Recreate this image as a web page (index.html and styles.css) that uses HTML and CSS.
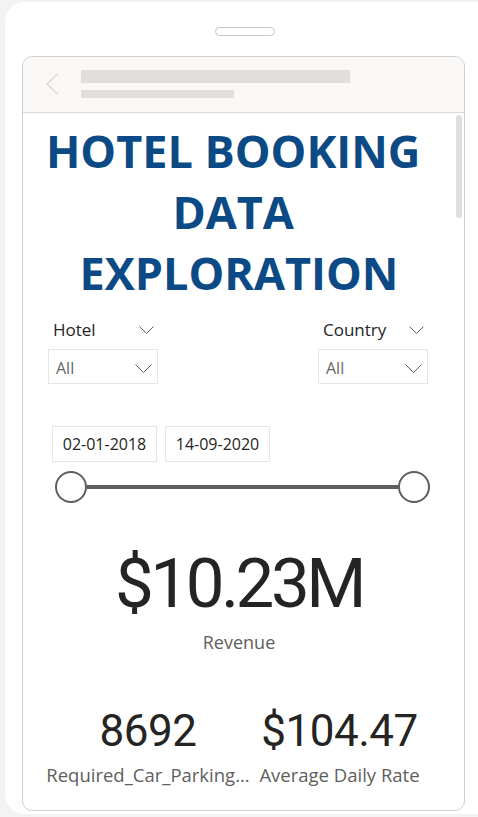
FILE: index.html
```html
<!DOCTYPE html>
<html>
<head>
<meta charset="utf-8">
<link rel="stylesheet" href="styles.css">
</head>
<body>
<div class="frame">
  <div class="notch"></div>
  <div class="screen">
    <div class="header">
      <svg class="back" width="13" height="22" viewBox="0 0 13 22"><polyline points="12,0.5 1,11 12,21.5" fill="none" stroke="#dcdad8" stroke-width="1.5"/></svg>
      <div class="bars">
        <div class="bar bar1"></div>
        <div class="bar bar2"></div>
      </div>
    </div>
    <div class="content">
      <div class="scrollbar"></div>
      <h1 class="title">HOTEL BOOKING&nbsp;<br>DATA&nbsp;<br>EXPLORATION</h1>
      <div class="slicers">
        <div class="slicer">
          <div class="slicer-head">
            <span>Hotel</span>
            <svg class="chev" width="15" height="8" viewBox="0 0 15 8"><polyline points="0.5,0.5 7.5,7.5 14.5,0.5" fill="none" stroke="#605e5c" stroke-width="1"/></svg>
          </div>
          <div class="dropdown">
            <span>All</span>
            <svg class="chev" width="17" height="9" viewBox="0 0 17 9"><polyline points="0.5,0.5 8.5,8.5 16.5,0.5" fill="none" stroke="#605e5c" stroke-width="1"/></svg>
          </div>
        </div>
        <div class="slicer">
          <div class="slicer-head">
            <span>Country</span>
            <svg class="chev" width="15" height="8" viewBox="0 0 15 8"><polyline points="0.5,0.5 7.5,7.5 14.5,0.5" fill="none" stroke="#605e5c" stroke-width="1"/></svg>
          </div>
          <div class="dropdown">
            <span>All</span>
            <svg class="chev" width="17" height="9" viewBox="0 0 17 9"><polyline points="0.5,0.5 8.5,8.5 16.5,0.5" fill="none" stroke="#605e5c" stroke-width="1"/></svg>
          </div>
        </div>
      </div>
      <div class="dates">
        <div class="date">02-01-2018</div>
        <div class="date">14-09-2020</div>
      </div>
      <div class="slider">
        <div class="knob"></div>
        <div class="track"></div>
        <div class="knob"></div>
      </div>
      <div class="kpi-main">
        <div class="kpi-value big">$10.23M</div>
        <div class="kpi-label">Revenue</div>
      </div>
      <div class="kpis">
        <div class="kpi">
          <div class="kpi-value small">8692</div>
          <div class="kpi-label">Required_Car_Parking...</div>
        </div>
        <div class="kpi">
          <div class="kpi-value small">$104.47</div>
          <div class="kpi-label">Average Daily Rate</div>
        </div>
      </div>
    </div>
  </div>
</div>
</body>
</html>
```

FILE: styles.css
```css
html, body {
  margin: 0;
  padding: 0;
}
body {
  background: #f3f3f3;
  width: 478px;
  height: 817px;
  overflow: hidden;
  font-family: "Open Sans", "Noto Sans", sans-serif;
}
.frame {
  margin: 2px 0 0 5px;
  width: 473px;
  height: 812px;
  background: #ffffff;
  border-radius: 20px 0 0 20px;
  padding-top: 25px;
  box-sizing: border-box;
}
.notch {
  margin-left: 210px;
  width: 60px;
  height: 9px;
  border: 1px solid #c8c6c4;
  border-radius: 5px;
  box-sizing: border-box;
}
.screen {
  margin: 20px 0 0 17px;
  width: 443px;
  height: 755px;
  border: 1px solid #d2d0ce;
  border-radius: 10px;
  box-sizing: border-box;
  overflow: hidden;
  background: #fff;
}
.header {
  height: 56px;
  background: #f9f8f7;
  border-bottom: 1px solid #dcdad8;
  box-sizing: border-box;
  display: flex;
  align-items: flex-start;
  padding: 13px 0 0 23px;
  gap: 22px;
}
.back {
  margin-top: 3px;
}
.bars {
  display: flex;
  flex-direction: column;
  gap: 7px;
}
.bar {
  background: #e1dfdd;
}
.bar1 {
  width: 269px;
  height: 13px;
}
.bar2 {
  width: 153px;
  height: 8px;
}
.content {
  position: relative;
  padding: 7px 9px 0 0;
}
.scrollbar {
  position: absolute;
  top: 2px;
  left: 433px;
  width: 6px;
  height: 103px;
  border-radius: 3px;
  background: #e1dfdd;
}
.title {
  margin: 0;
  text-align: center;
  font-family: "Open Sans", sans-serif;
  font-weight: 700;
  font-size: 45px;
  line-height: 61px;
  color: #0b4a84;
}
.slicers {
  display: flex;
  justify-content: space-between;
  padding: 0 27px 0 25px;
  margin-top: 17px;
}
.slicer {
  width: 110px;
}
.slicer-head {
  display: flex;
  justify-content: space-between;
  align-items: center;
  padding: 0 4px 0 5px;
  font-size: 17px;
  line-height: 20px;
  color: #252423;
}
.dropdown {
  margin-top: 9px;
  height: 35px;
  border: 1px solid #e6e6e6;
  box-sizing: border-box;
  display: flex;
  justify-content: space-between;
  align-items: center;
  padding: 3px 5px 0 7px;
  font-size: 16px;
  color: #666666;
}
.dates {
  display: flex;
  gap: 8px;
  padding-left: 29px;
  margin-top: 42px;
}
.date {
  width: 105px;
  height: 36px;
  border: 1px solid #e6e6e6;
  box-sizing: border-box;
  display: flex;
  align-items: center;
  justify-content: center;
  font-size: 16px;
  color: #252423;
}
.slider {
  display: flex;
  align-items: center;
  width: 375px;
  margin: 9px 0 0 32px;
}
.knob {
  width: 32px;
  height: 32px;
  border: 2px solid #605e5c;
  border-radius: 50%;
  box-sizing: border-box;
  background: #fff;
  flex: none;
}
.track {
  flex: 1;
  height: 4px;
  background: #605e5c;
}
.kpi-main {
  text-align: center;
  margin-top: 46px;
}
.kpi-value {
  font-family: "Roboto", sans-serif;
  color: #252423;
}
.kpi-value.big {
  font-size: 69px;
  line-height: 69px;
  letter-spacing: -3.5px;
}
.kpi-value.small {
  font-size: 44px;
  line-height: 44px;
  letter-spacing: -0.5px;
}
.kpi-label {
  font-size: 18.5px;
  line-height: 24px;
  color: #605e5c;
  white-space: nowrap;
}
.kpi-main .kpi-label {
  margin-top: 12px;
  font-size: 18px;
}
.kpis {
  display: grid;
  grid-template-columns: 208px 175px;
  padding-left: 21px;
  margin-top: 55px;
}
.kpi {
  text-align: center;
}
.kpi .kpi-label {
  margin-top: 10px;
}
```
